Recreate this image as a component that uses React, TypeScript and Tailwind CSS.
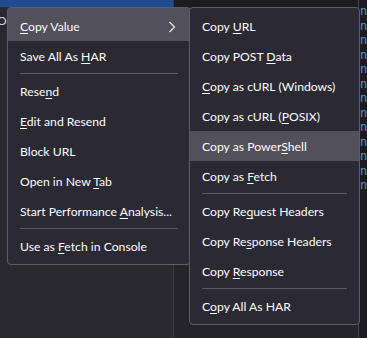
import React from 'react'

type Item = { label: string; key?: number; sep?: false } | { sep: true }

const mainItems: Item[] = [
    { label: 'Copy Value', key: 0 },
    { label: 'Save All As HAR', key: 12 },
    { sep: true },
    { label: 'Resend', key: 4 },
    { label: 'Edit and Resend', key: 0 },
    { label: 'Block URL' },
    { label: 'Open in New Tab', key: 12 },
    { label: 'Start Performance Analysis...', key: 18 },
    { sep: true },
    { label: 'Use as Fetch in Console', key: 7 },
]

const subItems: Item[] = [
    { label: 'Copy URL', key: 5 },
    { label: 'Copy POST Data', key: 10 },
    { label: 'Copy as cURL (Windows)', key: 0 },
    { label: 'Copy as cURL (POSIX)', key: 14 },
    { label: 'Copy as PowerShell', key: 13 },
    { label: 'Copy as Fetch', key: 8 },
    { sep: true },
    { label: 'Copy Request Headers', key: 7 },
    { label: 'Copy Response Headers', key: 7 },
    { label: 'Copy Response', key: 5 },
    { sep: true },
    { label: 'Copy All As HAR', key: 1 },
]

// underline the access key letter
const Label = ({ text, k }: { text: string; k?: number }) => {
    if (k === undefined) return <span className="whitespace-nowrap">{text}</span>
    return (
        <span className="whitespace-nowrap">
            {text.slice(0, k)}
            <span className="underline underline-offset-[2px] decoration-[1px]">{text[k]}</span>
            {text.slice(k + 1)}
        </span>
    )
}

const Menu = ({ items, hovered, chevron }: { items: Item[]; hovered: number; chevron?: boolean }) => (
    <div className="flex flex-col">
        {items.map((it, i) =>
            it.sep ? (
                <div key={i} className="h-[5px] pt-[2px] px-[12px]">
                    <div className="h-px bg-[#5b5a62]" />
                </div>
            ) : (
                <div
                    key={i}
                    className={`h-[30px] flex items-center justify-between pl-[12px] pr-[10px] pt-[2px] text-[12.2px] text-[#fbfbfe] ${i === hovered ? 'bg-[#52515a]' : ''}`}
                >
                    <Label text={it.label} k={it.key} />
                    {chevron && i === 0 && (
                        <svg width="8" height="12" viewBox="0 0 8 12" className="mr-[4px]">
                            <path d="M1.5 1 L6.5 6 L1.5 11" fill="none" stroke="#e8e8ec" strokeWidth="1.2" />
                        </svg>
                    )}
                </div>
            )
        )}
    </div>
)

export default function App() {
    const lines = Array.from({ length: 13 })
    return (
        <div
            className="relative w-[367px] h-[338px] overflow-hidden flex bg-[#2a2930]"
            style={{ fontFamily: 'Lato, "Noto Sans", sans-serif' }}
        >
            {/* backdrop: request list, details panel, code column */}
            <div className="w-[173px] shrink-0 flex flex-col">
                <div className="h-[7px] bg-[#1f4c8c]" />
                <div className="pt-[5px] -ml-[3px] text-[12px] text-[#cfcfd6]">Or</div>
            </div>
            <div className="w-[185px] shrink-0 flex flex-col border-l border-[#3a3940] bg-[#25242b]">
                <div className="h-[7px] bg-[#1c1b22]" />
            </div>
            <div className="flex-1 flex flex-col pt-[4px] pl-[1px] border-l border-[#44434a] bg-[#1c1b22] font-['DejaVu_Sans_Mono',monospace] text-[12px] leading-[14.5px] text-[#3f9ad8]">
                {lines.map((_, i) => (
                    <span key={i}>nt</span>
                ))}
            </div>

            {/* main context menu */}
            <div className="absolute left-[7px] top-[7px] w-[184px] rounded-[4px] border border-[#5e5d65] bg-[#2b2a33] pb-[3px]">
                <div className="bg-[#52515a] pt-[3px]">
                    <Menu items={mainItems.slice(0, 1)} hovered={0} chevron />
                </div>
                <Menu items={mainItems.slice(1)} hovered={-1} />
            </div>

            {/* submenu */}
            <div className="absolute left-[189px] top-[7px] w-[171px] rounded-[4px] border border-[#5e5d65] bg-[#2b2a33] pt-[3px] pb-[3px]">
                <Menu items={subItems} hovered={4} />
            </div>
        </div>
    )
}
